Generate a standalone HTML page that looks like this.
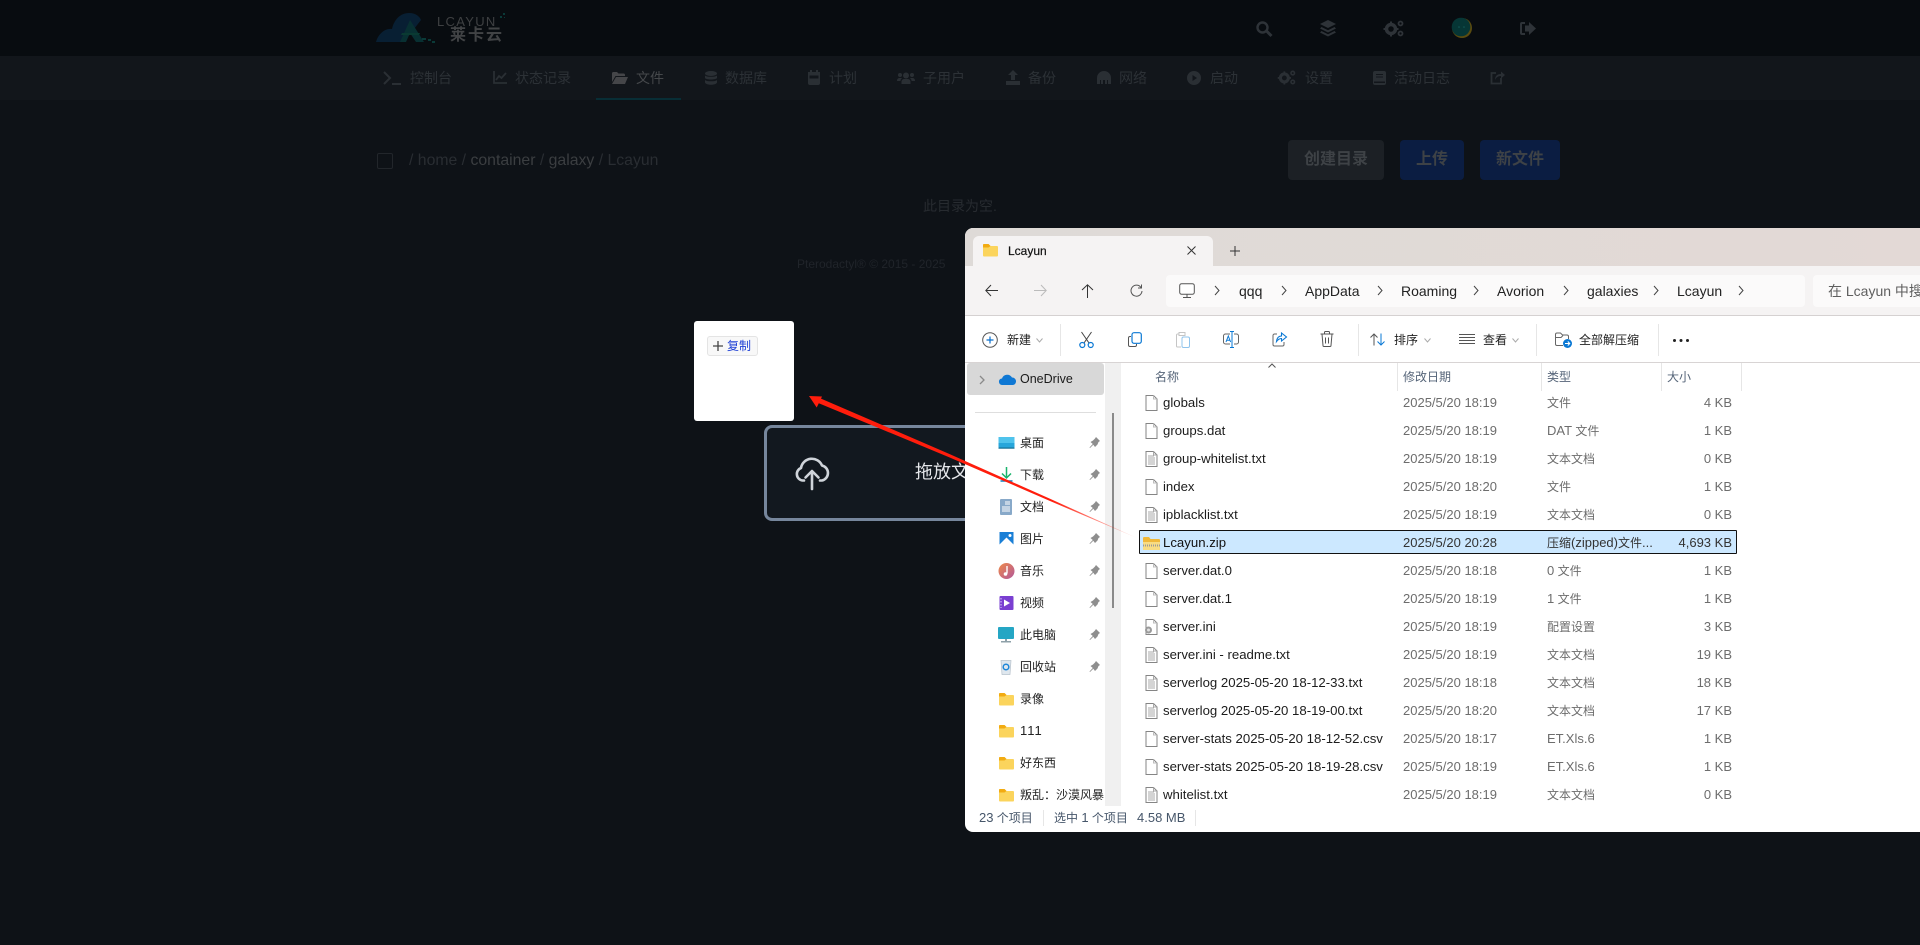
<!DOCTYPE html>
<html lang="zh"><head><meta charset="utf-8"><title>Lcayun</title>
<style>
html,body{margin:0;padding:0;width:1920px;height:945px;overflow:hidden;background:#0e1217}
body{position:relative;font-family:"Liberation Sans","Noto Sans CJK SC",sans-serif}
.a{position:absolute}
.n{position:absolute;top:56px;height:44px;line-height:44px;font-size:14px;color:#2c3136;white-space:nowrap}
svg.a{display:block;overflow:visible}
.ni{color:#2a2f34}
.ti{color:#2e3338}
.btn{position:absolute;top:140px;height:40px;line-height:40px;border-radius:4px;text-align:center;font-size:16px;font-weight:700;color:#3e4246}
#win{position:absolute;left:965px;top:228px;width:955px;height:604px;background:#fff;border-radius:8px 0 0 8px;overflow:hidden;font-size:13px;color:#1a1a1a}
.w{position:absolute;white-space:nowrap}
.c{font-size:12px}
.path{top:47px;height:32px;line-height:32px;font-size:14px;color:#222}
.chev{position:absolute;top:57px;width:6px;height:11px}
.tb{top:94px;height:36px;line-height:36px;font-size:12px;color:#222}
.v{position:absolute;width:1px;background:#e6e6e6}
.h{top:135px;height:28px;line-height:28px;font-size:12px;color:#566579}
.r{position:absolute;left:0;width:955px;height:28px;line-height:28px}
.r>span{position:absolute;white-space:nowrap}
.r svg{position:absolute;left:180px;top:6px;width:13px;height:16px}
.nm{left:198px;color:#1c1c1c;font-size:13.200px}
.dt{left:438px;color:#6d6d6d}
.ty{left:582px;color:#6d6d6d;font-size:12px}
.ty i{font-style:normal;font-size:13px}
.sz{right:188px;color:#6d6d6d}
.s{position:absolute;left:0;width:140px;height:32px;line-height:32px;font-size:12px;color:#222}
.s>span{position:absolute;left:55px;white-space:nowrap}
.s>svg{position:absolute;left:33px;top:8px;width:17px;height:16px}
.s>svg.p{left:124px;top:9px;width:12px;height:13px}
.sb{top:578px;height:24px;line-height:24px;font-size:12px;color:#46566a}
.sb i{font-style:normal;font-size:13px}
</style></head><body>
<svg width="0" height="0" style="position:absolute"><defs>
<symbol id="f" viewBox="0 0 13 16"><path d="M1 .5h7.500L12 4v11.500H1z" fill="#fff" stroke="#858585"/><path d="M8.500.5V4H12" fill="none" stroke="#bdbdbd"/></symbol>
<symbol id="x" viewBox="0 0 13 16"><path d="M1 .5h7.500L12 4v11.500H1z" fill="#fff" stroke="#858585"/><path d="M8.500.5V4H12M3 5h6M3 7h7M3 9h7M3 11h7M3 13h7" fill="none" stroke="#a8a8a8"/></symbol>
<symbol id="d" viewBox="0 0 17 16"><path d="M1 3a1 1 0 0 1 1-1h4.500l2 2H15a1 1 0 0 1 1 1v8.500a1 1 0 0 1-1 1H2a1 1 0 0 1-1-1z" fill="#fbd45c"/><path d="M1 3a1 1 0 0 1 1-1h4.500l2 2-2 1.500H1z" fill="#f2ab12"/></symbol>
<symbol id="pin" viewBox="0 0 12 13"><path d="M7 1l4 4-1.500 1-1 2.500L6 11 4.300 8.700 1 12l-.5-.5L3.800 8 1.500 6 4 4.500 6 2.500z" fill="#8e8e8e"/></symbol>
</defs></svg>

<!-- top bar -->
<div class="a" style="left:0;top:0;width:1920px;height:56px;background:#080c10"></div>
<div class="a" style="left:0;top:56px;width:1920px;height:44px;background:#12161b"></div>
<!-- logo -->
<svg class="a" style="left:376px;top:12px;width:72px;height:32px" viewBox="0 0 72 32">
<path d="M0 30C2 22 9 16 16 17 18 8 24 1 33 1 40 1 44 5 45 8L28 30z" fill="#081f33"/>
<path d="M24 30 34 8l14 22h-8l-6-9-4 9z" fill="#083032"/>
<path d="M26 21h18l-1 2H25z" fill="#0a3a32"/>
<path d="M46 26h4v2h-4zM52 27h3v2h-3zM56 29h3v2h-3z" fill="#0a3a38"/>
</svg>
<div class="a" style="left:437px;top:14px;font-size:13px;line-height:16px;color:#3e4042;letter-spacing:1.300px;font-weight:400;white-space:nowrap">LCAYUN</div>
<div class="a" style="left:450px;top:28px;font-size:16px;line-height:16px;color:#414345;letter-spacing:2px;font-weight:700;white-space:nowrap">莱卡云</div>
<svg class="a" style="left:500px;top:12px;width:8px;height:8px"><rect x="3" y="1" width="2" height="2" fill="#0a3a38"/><rect x="0" y="4" width="2" height="2" fill="#0a3a38"/><rect x="4" y="5" width="1" height="1" fill="#0a3a38"/></svg>

<!-- top icons -->
<svg class="a ti" style="left:1256px;top:21px;width:17px;height:16px" viewBox="0 0 17 16"><circle cx="6.500" cy="6.500" r="5" fill="none" stroke="currentColor" stroke-width="2.400"/><path d="M10.500 10l5 5" stroke="currentColor" stroke-width="3"/></svg>
<svg class="a ti" style="left:1320px;top:20px;width:16px;height:17px" viewBox="0 0 16 17" fill="currentColor"><path d="M8 0l8 4-8 4-8-4z"/><path d="M1.500 7L8 10.200 14.500 7 16 8.500l-8 4-8-4z"/><path d="M1.500 11L8 14.200 14.500 11 16 12.500l-8 4-8-4z"/></svg>
<svg class="a ti" style="left:1384px;top:20px;width:20px;height:17px" viewBox="0 0 20 17" fill="currentColor"><circle cx="7" cy="9" r="4.500" fill="none" stroke="currentColor" stroke-width="3.500"/><path d="M6 1.500h2v3H6zM6 13.500h2v3H6zM-.5 8h3v2h-3zM11.500 8h3v2h-3z"/><circle cx="16.500" cy="3.500" r="2" fill="none" stroke="currentColor" stroke-width="1.800"/><circle cx="16.500" cy="13.500" r="2" fill="none" stroke="currentColor" stroke-width="1.800"/></svg>
<svg class="a" style="left:1452px;top:18px;width:20px;height:20px" viewBox="0 0 20 20"><circle cx="10" cy="10" r="10" fill="#5a4c10"/><circle cx="9" cy="9" r="9.300" fill="#063635"/><circle cx="7" cy="9" r=".8" fill="#145a57"/><circle cx="12" cy="9" r=".8" fill="#145a57"/></svg>
<svg class="a ti" style="left:1520px;top:22px;width:16px;height:13px" viewBox="0 0 16 13" fill="currentColor"><path d="M5 1H2a1 1 0 0 0-1 1v9a1 1 0 0 0 1 1h3" fill="none" stroke="currentColor" stroke-width="2"/><path d="M9 0l7 6.500L9 13V9.500H5v-6h4z"/></svg>

<!-- nav -->
<svg class="a ni" style="left:383px;top:71px;width:19px;height:14px" viewBox="0 0 19 14"><path d="M1 1l6 6-6 6" fill="none" stroke="currentColor" stroke-width="2"/><path d="M9 13h9" stroke="currentColor" stroke-width="2"/></svg>
<div class="n" style="left:410px">控制台</div>
<svg class="a ni" style="left:493px;top:71px;width:14px;height:13px" viewBox="0 0 14 13"><path d="M1 0v12h13" fill="none" stroke="currentColor" stroke-width="1.800"/><path d="M3 9l3-4 2.500 2L13 2" fill="none" stroke="currentColor" stroke-width="1.800"/></svg>
<div class="n" style="left:515px">状态记录</div>
<svg class="a" style="left:612px;top:72px;width:16px;height:12px;color:#454649" viewBox="0 0 16 12" fill="currentColor"><path d="M0 1.500A1.500 1.500 0 0 1 1.500 0H5l1.500 1.500h5A1.500 1.500 0 0 1 13 3v1H3.500L0 10z"/><path d="M4 5h12l-3 7H0z"/></svg>
<div class="n" style="left:636px;color:#45484b">文件</div>
<div class="a" style="left:596px;top:98px;width:85px;height:2px;background:#082e36"></div>
<svg class="a ni" style="left:705px;top:71px;width:12px;height:14px" viewBox="0 0 12 14" fill="currentColor"><ellipse cx="6" cy="2.500" rx="6" ry="2.500"/><path d="M0 4.500c1 1.700 11 1.700 12 0V7c-1 2-11 2-12 0zM0 9c1 1.700 11 1.700 12 0v2.500c-1 3-11 3-12 0z"/></svg>
<div class="n" style="left:725px">数据库</div>
<svg class="a ni" style="left:808px;top:70px;width:12px;height:15px" viewBox="0 0 12 15" fill="currentColor"><path d="M2 0h2v2h4V0h2v2h2v11a2 2 0 0 1-2 2H2a2 2 0 0 1-2-2V2h2z"/><rect x="1.500" y="5.500" width="9" height="3" fill="#12161b"/></svg>
<div class="n" style="left:829px">计划</div>
<svg class="a ni" style="left:897px;top:72px;width:18px;height:12px" viewBox="0 0 18 12" fill="currentColor"><circle cx="9" cy="3.500" r="3"/><circle cx="3" cy="3" r="2"/><circle cx="15" cy="3" r="2"/><path d="M4.500 12V9.500A3 3 0 0 1 7.500 7h3a3 3 0 0 1 3 2.500V12zM0 8.500A2.500 2.500 0 0 1 2.500 6H5L3.500 8v1H0zM18 8.500A2.500 2.500 0 0 0 15.500 6H13l1.500 2v1H18z"/></svg>
<div class="n" style="left:923px">子用户</div>
<svg class="a ni" style="left:1006px;top:70px;width:14px;height:15px" viewBox="0 0 14 15" fill="currentColor"><path d="M7 0l5 5H9v5H5V5H2z"/><path d="M0 11h14v4H0z"/></svg>
<div class="n" style="left:1028px">备份</div>
<svg class="a ni" style="left:1097px;top:71px;width:14px;height:13px" viewBox="0 0 14 13" fill="currentColor"><path d="M0 13V7a7 7 0 0 1 14 0v6h-3V9h-1v4H8V9H6v4H4V9H3v4z"/></svg>
<div class="n" style="left:1119px">网络</div>
<svg class="a ni" style="left:1187px;top:71px;width:14px;height:14px" viewBox="0 0 14 14"><circle cx="7" cy="7" r="7" fill="currentColor"/><path d="M5.500 4l4.500 3-4.500 3z" fill="#12161b"/></svg>
<div class="n" style="left:1210px">启动</div>
<svg class="a ni" style="left:1278px;top:70px;width:18px;height:15px" viewBox="0 0 20 17" fill="currentColor"><circle cx="7" cy="9" r="4.500" fill="none" stroke="currentColor" stroke-width="3.500"/><path d="M6 1.500h2v3H6zM6 13.500h2v3H6zM-.5 8h3v2h-3zM11.500 8h3v2h-3z"/><circle cx="16.500" cy="3.500" r="2" fill="none" stroke="currentColor" stroke-width="1.800"/><circle cx="16.500" cy="13.500" r="2" fill="none" stroke="currentColor" stroke-width="1.800"/></svg>
<div class="n" style="left:1305px">设置</div>
<svg class="a ni" style="left:1373px;top:71px;width:13px;height:14px" viewBox="0 0 13 14" fill="currentColor"><rect width="13" height="14" rx="2"/><path d="M3 3h7v1H3zM3 5.500h7v1H3zM1 10.500h11v1.500H1z" fill="#12161b"/></svg>
<div class="n" style="left:1394px">活动日志</div>
<svg class="a ni" style="left:1490px;top:70px;width:15px;height:15px" viewBox="0 0 15 15"><path d="M6 3H1.500v10.500H11V8" fill="none" stroke="currentColor" stroke-width="1.800"/><path d="M5 10c0-4 2-6 6-6V1.500L15 5l-4 3.500V6C8 6 6 7.500 5 10z" fill="currentColor"/></svg>

<!-- content -->
<div class="a" style="left:377px;top:153px;width:14px;height:14px;border:1px solid #22262b;border-radius:2px"></div>
<div class="a" style="left:409px;top:149px;height:24px;line-height:24px;font-size:15.800px;color:#292d32;white-space:nowrap">/ home / <span style="color:#3b3e41">container</span> / <span style="color:#3b3e41">galaxy</span> / Lcayun</div>
<div class="btn" style="left:1288px;width:96px;background:#1c2025">创建目录</div>
<div class="btn" style="left:1400px;width:64px;background:#0b1d42">上传</div>
<div class="btn" style="left:1480px;width:80px;background:#0b1d42">新文件</div>
<div class="a" style="left:923px;top:196px;line-height:20px;font-size:14px;color:#272b30;white-space:nowrap">此目录为空.</div>
<div class="a" style="left:797px;top:256px;line-height:16px;font-size:12px;color:#20242a;white-space:nowrap">Pterodactyl® © 2015 - 2025</div>

<!-- drop zone -->
<div class="a" style="left:764px;top:425px;width:260px;height:90px;border:3px solid #76869c;border-radius:8px;background:#12181f"></div>
<svg class="a" style="left:795px;top:454px;width:34px;height:37px" viewBox="0 0 34 37" fill="none" stroke="#cfd4da" stroke-width="2.600" stroke-linecap="round" stroke-linejoin="round"><path d="M9 26.500H7.500A6.500 6.500 0 0 1 6 14 11 11 0 0 1 27 11.500 7.700 7.700 0 0 1 27 26.500h-2"/><path d="M17 35V17M10.500 23.500L17 17l6.500 6.500"/></svg>
<div class="a" style="left:915px;top:458px;line-height:28px;font-size:18px;color:#e5e7eb;white-space:nowrap">拖放文件上传</div>

<!-- white card -->
<div class="a" style="left:694px;top:321px;width:100px;height:100px;background:#fff;border-radius:3px"></div>
<div class="a" style="left:707px;top:336px;width:49px;height:18px;border:1px solid #e4e4e4;border-radius:3px;background:#f8f8f8"></div>
<svg class="a" style="left:713px;top:341px;width:10px;height:10px"><path d="M5 0v10M0 5h10" stroke="#444" stroke-width="1.300"/></svg>
<div class="a" style="left:727px;top:337px;line-height:18px;font-size:12px;color:#2142d6;white-space:nowrap">复制</div>

<!-- explorer -->
<div id="win">
<div class="a" style="left:0;top:0;width:955px;height:38px;background:linear-gradient(90deg,#dedad7,#e3d9d6)"></div>
<div class="a" style="left:8px;top:8px;width:240px;height:31px;background:#f5f3f3;border-radius:6px 6px 0 0"></div>
<div class="a" style="left:0;top:38px;width:955px;height:49px;background:#f5f3f3"></div>
<div class="a" style="left:0;top:87px;width:955px;height:1px;background:#d5d1d1"></div>
<svg class="a" style="left:17px;top:15px;width:17px;height:15px" viewBox="0 1 17 15"><use href="#d" width="17" height="16"/></svg>
<div class="w" style="left:43px;top:14px;line-height:18px;font-size:12px;color:#111;font-weight:400;-webkit-text-stroke:.2px #111">Lcayun</div>
<svg class="a" style="left:222px;top:18px;width:9px;height:9px"><path d="M.5.500l8 8M8.500.500l-8 8" stroke="#333" fill="none"/></svg>
<svg class="a" style="left:265px;top:18px;width:10px;height:10px"><path d="M5 0v10M0 5h10" stroke="#333"/></svg>
<!-- address row -->
<svg class="a" style="left:20px;top:56px;width:14px;height:13px" viewBox="0 0 14 13"><path d="M13 6.500H1M6 1L.8 6.500 6 12" fill="none" stroke="#333"/></svg>
<svg class="a" style="left:68px;top:56px;width:14px;height:13px" viewBox="0 0 14 13"><path d="M1 6.500h12M8 1l5.200 5.500L8 12" fill="none" stroke="#bbb"/></svg>
<svg class="a" style="left:116px;top:56px;width:13px;height:14px" viewBox="0 0 13 14"><path d="M6.500 14V1M1 6L6.500.8 12 6" fill="none" stroke="#333"/></svg>
<svg class="a" style="left:165px;top:56px;width:13px;height:13px" viewBox="0 0 13 13"><path d="M11 3.500A5.500 5.500 0 1 0 12 7M11.500.5v3.500H8" fill="none" stroke="#555"/></svg>
<div class="a" style="left:201px;top:47px;width:639px;height:32px;background:#fbfafa;border-radius:4px"></div>
<div class="a" style="left:848px;top:47px;width:120px;height:32px;background:#fbfafa;border-radius:4px"></div>
<svg class="a" style="left:214px;top:55px;width:16px;height:16px" viewBox="0 0 16 16"><rect x=".7" y=".7" width="14.600" height="10.600" rx="2" fill="#fff" stroke="#555"/><path d="M8 11.500v2.500M4 14.500h8" stroke="#555"/></svg>
<svg class="chev" style="left:249px" viewBox="0 0 6 11"><path d="M1 1l4 4.500L1 10" fill="none" stroke="#444"/></svg>
<div class="w path" style="left:274px">qqq</div>
<svg class="chev" style="left:316px" viewBox="0 0 6 11"><path d="M1 1l4 4.500L1 10" fill="none" stroke="#444"/></svg>
<div class="w path" style="left:340px">AppData</div>
<svg class="chev" style="left:412px" viewBox="0 0 6 11"><path d="M1 1l4 4.500L1 10" fill="none" stroke="#444"/></svg>
<div class="w path" style="left:436px">Roaming</div>
<svg class="chev" style="left:508px" viewBox="0 0 6 11"><path d="M1 1l4 4.500L1 10" fill="none" stroke="#444"/></svg>
<div class="w path" style="left:532px">Avorion</div>
<svg class="chev" style="left:598px" viewBox="0 0 6 11"><path d="M1 1l4 4.500L1 10" fill="none" stroke="#444"/></svg>
<div class="w path" style="left:622px">galaxies</div>
<svg class="chev" style="left:688px" viewBox="0 0 6 11"><path d="M1 1l4 4.500L1 10" fill="none" stroke="#444"/></svg>
<div class="w path" style="left:712px">Lcayun</div>
<svg class="chev" style="left:773px" viewBox="0 0 6 11"><path d="M1 1l4 4.500L1 10" fill="none" stroke="#444"/></svg>
<div class="w path" style="left:863px;color:#5f5f5f">在 Lcayun 中搜索</div>
<!-- toolbar -->
<svg class="a" style="left:17px;top:104px;width:16px;height:16px" viewBox="0 0 16 16"><circle cx="8" cy="8" r="7.300" fill="none" stroke="#555"/><path d="M8 4.500v7M4.500 8h7" stroke="#0a6fcc" stroke-width="1.200"/></svg>
<div class="w tb" style="left:42px">新建</div>
<svg class="a" style="left:71px;top:110px;width:7px;height:5px"><path d="M.5.500L3.500 4l3-3.500" fill="none" stroke="#aaa"/></svg>
<div class="v" style="left:95px;top:96px;height:32px"></div>
<svg class="a" style="left:114px;top:103px;width:15px;height:17px" viewBox="0 0 15 17"><path d="M2.500 1l7.500 11M12.500 1L5 12" stroke="#444" fill="none"/><circle cx="3.300" cy="14" r="2.500" fill="none" stroke="#0a78d4" stroke-width="1.200"/><circle cx="11.700" cy="14" r="2.500" fill="none" stroke="#0a78d4" stroke-width="1.200"/></svg>
<svg class="a" style="left:163px;top:104px;width:14px;height:15px" viewBox="0 0 14 15"><path d="M3 4.500H2a1.500 1.500 0 0 0-1.500 1.500v7A1.500 1.500 0 0 0 2 14.500h5A1.500 1.500 0 0 0 8.500 13v-1" fill="none" stroke="#555"/><rect x="4" y=".7" width="9.300" height="10.600" rx="2" fill="#fff" stroke="#0a78d4" stroke-width="1.200"/></svg>
<svg class="a" style="left:211px;top:104px;width:14px;height:16px" viewBox="0 0 14 16"><path d="M3.500 2H1.500A1 1 0 0 0 .5 3v11a1 1 0 0 0 1 1H5" fill="none" stroke="#c5c5c5"/><rect x="3" y=".5" width="6" height="3" fill="#fff" stroke="#c5c5c5"/><rect x="6" y="5" width="7.500" height="10.500" rx="1.500" fill="#fff" stroke="#90c4ec"/></svg>
<svg class="a" style="left:258px;top:103px;width:16px;height:17px" viewBox="0 0 16 17"><rect x=".5" y="3" width="15" height="10" rx="2" fill="none" stroke="#666"/><rect x="7" y="2" width="4" height="12" fill="#fff"/><path d="M3 11l2.300-6 2.300 6M3.800 9.300h3" stroke="#0a78d4" fill="none"/><path d="M9 .5v16M7 .5h4M7 16.500h4" stroke="#0a78d4" fill="none"/></svg>
<svg class="a" style="left:307px;top:103px;width:15px;height:16px" viewBox="0 0 15 16"><path d="M5 3H2.500A1.500 1.500 0 0 0 1 4.500v9A1.500 1.500 0 0 0 2.500 15h8a1.500 1.500 0 0 0 1.500-1.500V11" fill="none" stroke="#666"/><path d="M4.500 10.500C5 6.500 7 5 9.500 5V2L14.500 6 9.500 10V7.500c-2 0-3.500 1-5 3z" fill="none" stroke="#0a78d4" stroke-width="1.100"/></svg>
<svg class="a" style="left:355px;top:103px;width:14px;height:16px" viewBox="0 0 14 16"><path d="M.5 3h13M4.500 3V1.500a1 1 0 0 1 1-1h3a1 1 0 0 1 1 1V3M2 3l1 11.500a1 1 0 0 0 1 1h6a1 1 0 0 0 1-1L12 3M5.500 6.500v6M8.500 6.500v6" fill="none" stroke="#555"/></svg>
<div class="v" style="left:393px;top:96px;height:32px"></div>
<svg class="a" style="left:405px;top:105px;width:16px;height:13px" viewBox="0 0 16 13"><path d="M4 12.500V1M.5 4.500L4 1l3.500 3.500" fill="none" stroke="#555"/><path d="M11 .5V12M7.500 8.500L11 12l3.500-3.500" fill="none" stroke="#0a78d4"/></svg>
<div class="w tb" style="left:429px">排序</div>
<svg class="a" style="left:459px;top:110px;width:7px;height:5px"><path d="M.5.500L3.500 4l3-3.500" fill="none" stroke="#aaa"/></svg>
<svg class="a" style="left:494px;top:106px;width:16px;height:11px"><path d="M0 .5h16M0 3.500h16M0 6.500h16M0 9.500h16" stroke="#555"/></svg>
<div class="w tb" style="left:518px">查看</div>
<svg class="a" style="left:547px;top:110px;width:7px;height:5px"><path d="M.5.500L3.500 4l3-3.500" fill="none" stroke="#aaa"/></svg>
<div class="v" style="left:571px;top:96px;height:32px"></div>
<svg class="a" style="left:590px;top:104px;width:17px;height:16px" viewBox="0 0 17 16"><path d="M8 13.500H2A1.500 1.500 0 0 1 .5 12V2.500A1.500 1.500 0 0 1 2 1h3.500l2 2H12a1.500 1.500 0 0 1 1.500 1.500V7M.5 5.500h5.500l2-2" fill="none" stroke="#666"/><circle cx="12.500" cy="11.500" r="4.500" fill="#0a78d4"/><path d="M10 11.500h4.500M12.800 9.500l2 2-2 2" fill="none" stroke="#fff"/></svg>
<div class="w tb" style="left:614px">全部解压缩</div>
<div class="v" style="left:693px;top:96px;height:32px"></div>
<svg class="a" style="left:708px;top:111px;width:16px;height:3px" fill="#222"><circle cx="1.500" cy="1.500" r="1.500"/><circle cx="8" cy="1.500" r="1.500"/><circle cx="14.500" cy="1.500" r="1.500"/></svg>
<div class="a" style="left:0;top:134px;width:955px;height:1px;background:#d8d4d4"></div>
<!-- sidebar -->
<div class="a" style="left:2px;top:135px;width:137px;height:32px;background:#d8d8d8;border-radius:3px"></div>
<svg class="a" style="left:14px;top:147px;width:6px;height:10px" viewBox="0 0 6 10"><path d="M1 1l4 4-4 4" fill="none" stroke="#8a8a8a" stroke-width="1.300"/></svg>
<svg class="a" style="left:34px;top:145px;width:17px;height:12px" viewBox="0 0 17 12"><path d="M0 9a3 3 0 0 1 3-3.500A5.500 5.500 0 0 1 13 4.500 3.800 3.800 0 0 1 17 8.500 3.500 3.500 0 0 1 14 12H3A3 3 0 0 1 0 9z" fill="#0f78d4"/></svg>
<div class="w" style="left:55px;top:135px;line-height:32px;font-size:12.500px;color:#1a1a1a">OneDrive</div>
<div class="a" style="left:10px;top:184px;width:121px;height:1px;background:#dedede"></div>
<div class="a" style="left:140px;top:135px;width:16px;height:443px;background:#f0f0f0"></div>
<div class="a" style="left:146.500px;top:185px;width:2.500px;height:195px;background:#8a8a8a"></div>

<div class="s" style="top:199px"><svg viewBox="0 0 17 16"><rect x=".5" y="2" width="16" height="11" rx="1" fill="#27a6db"/><rect x=".5" y="2" width="16" height="6" fill="#4fc3ec"/><rect x=".5" y="12.500" width="16" height="1.200" fill="#106c92"/></svg><span>桌面</span><svg class="p"><use href="#pin"/></svg></div>
<div class="s" style="top:231px"><svg viewBox="0 0 17 16"><path d="M8.500 0v10M4 6.500l4.500 4.500L13 6.500" fill="none" stroke="#19b36b" stroke-width="1.500"/><path d="M2.500 14h12" stroke="#0f7fc0" stroke-width="1.500"/></svg><span>下载</span><svg class="p"><use href="#pin"/></svg></div>
<div class="s" style="top:263px"><svg viewBox="0 0 17 16"><rect x="2" y="0" width="12" height="16" rx="1" fill="#88a9c9"/><path d="M7 3h5M7 5h5M4 8h8M4 10h8M4 12h8" stroke="#fff"/></svg><span>文档</span><svg class="p"><use href="#pin"/></svg></div>
<div class="s" style="top:295px"><svg viewBox="0 0 17 16"><rect x="1.500" y="1" width="14" height="14" fill="#1a7fd6"/><path d="M1.500 13.500l7-7 7 7V15h-14z" fill="#fff"/><circle cx="12" cy="4.500" r="1.500" fill="#fff"/></svg><span>图片</span><svg class="p"><use href="#pin"/></svg></div>
<div class="s" style="top:327px"><svg viewBox="0 0 17 16"><defs><linearGradient id="m" x1="0" y1="0" x2="1" y2="1"><stop offset="0" stop-color="#ef8a4a"/><stop offset="1" stop-color="#b2579a"/></linearGradient></defs><circle cx="8.500" cy="8" r="8" fill="url(#m)"/><path d="M9 3v7.500" stroke="#fff" stroke-width="1.400"/><circle cx="7.500" cy="11" r="1.800" fill="#fff"/></svg><span>音乐</span><svg class="p"><use href="#pin"/></svg></div>
<div class="s" style="top:359px"><svg viewBox="0 0 17 16"><rect x="1.500" y="1" width="14" height="14" rx="1" fill="#7a3fd1"/><path d="M6 4.500l6 3.500-6 3.500z" fill="#fff"/><path d="M3 3v10" stroke="#bda0ee" stroke-width="1.500" stroke-dasharray="1.500 1.500"/></svg><span>视频</span><svg class="p"><use href="#pin"/></svg></div>
<div class="s" style="top:391px"><svg viewBox="0 0 17 16"><rect x="0" y="0" width="16" height="12" rx="1" fill="#25a6c4"/><rect x="7" y="12" width="2" height="2" fill="#8ea0a8"/><rect x="3" y="14" width="10" height="1.500" fill="#8ea0a8"/></svg><span>此电脑</span><svg class="p"><use href="#pin"/></svg></div>
<div class="s" style="top:423px"><svg viewBox="0 0 17 16"><path d="M3 1.500h10l-1 14H4z" fill="#dfe7ee" stroke="#b7c2cc" stroke-width=".7"/><circle cx="8" cy="8" r="2.800" fill="none" stroke="#2087d8" stroke-width="1.500"/></svg><span>回收站</span><svg class="p"><use href="#pin"/></svg></div>
<div class="s" style="top:455px"><svg viewBox="0 0 17 16"><use href="#d"/></svg><span>录像</span></div>
<div class="s" style="top:487px"><svg viewBox="0 0 17 16"><use href="#d"/></svg><span style="font-size:13px;letter-spacing:1px">111</span></div>
<div class="s" style="top:519px"><svg viewBox="0 0 17 16"><use href="#d"/></svg><span>好东西</span></div>
<div class="s" style="top:551px"><svg viewBox="0 0 17 16"><use href="#d"/></svg><span style="letter-spacing:0">叛乱：沙漠风暴</span></div>

<!-- headers -->
<svg class="a" style="left:303px;top:135px;width:8px;height:5px"><path d="M.5 4.500L4 1l3.500 3.500" fill="none" stroke="#555"/></svg>
<div class="w h" style="left:190px">名称</div>
<div class="w h" style="left:438px">修改日期</div>
<div class="w h" style="left:582px">类型</div>
<div class="w h" style="left:702px">大小</div>
<div class="v" style="left:432px;top:135px;height:28px"></div>
<div class="v" style="left:576px;top:135px;height:28px"></div>
<div class="v" style="left:696px;top:135px;height:28px"></div>
<div class="v" style="left:776px;top:135px;height:28px"></div>

<!-- rows -->
<div class="a" style="left:174px;top:302px;width:596px;height:22px;background:#cce8ff;border:1px solid #111;border-radius:1px"></div>
<div class="r" style="top:161px"><svg><use href="#f"/></svg><span class="nm">globals</span><span class="dt">2025/5/20 18:19</span><span class="ty">文件</span><span class="sz">4 KB</span></div>
<div class="r" style="top:189px"><svg><use href="#f"/></svg><span class="nm">groups.dat</span><span class="dt">2025/5/20 18:19</span><span class="ty"><i>DAT</i> 文件</span><span class="sz">1 KB</span></div>
<div class="r" style="top:217px"><svg><use href="#x"/></svg><span class="nm">group-whitelist.txt</span><span class="dt">2025/5/20 18:19</span><span class="ty">文本文档</span><span class="sz">0 KB</span></div>
<div class="r" style="top:245px"><svg><use href="#f"/></svg><span class="nm">index</span><span class="dt">2025/5/20 18:20</span><span class="ty">文件</span><span class="sz">1 KB</span></div>
<div class="r" style="top:273px"><svg><use href="#x"/></svg><span class="nm">ipblacklist.txt</span><span class="dt">2025/5/20 18:19</span><span class="ty">文本文档</span><span class="sz">0 KB</span></div>
<div class="r" style="top:301px"><svg style="left:178px;width:17px;top:7px;height:15px" viewBox="0 0 17 15"><path d="M0 2a1 1 0 0 1 1-1h5l1.500 2H16a1 1 0 0 1 1 1v10H0z" fill="#f0b83a"/><rect y="6" width="17" height="8" fill="#f8dc84"/><path d="M0 9.500h17" stroke="#9a9a9a" stroke-width="2" stroke-dasharray="1 1"/></svg><span class="nm" style="color:#111">Lcayun.zip</span><span class="dt" style="color:#333">2025/5/20 20:28</span><span class="ty" style="color:#333">压缩<i>(zipped)</i>文件<i>...</i></span><span class="sz" style="color:#333">4,693 KB</span></div>
<div class="r" style="top:329px"><svg><use href="#f"/></svg><span class="nm">server.dat.0</span><span class="dt">2025/5/20 18:18</span><span class="ty"><i>0</i> 文件</span><span class="sz">1 KB</span></div>
<div class="r" style="top:357px"><svg><use href="#f"/></svg><span class="nm">server.dat.1</span><span class="dt">2025/5/20 18:19</span><span class="ty"><i>1</i> 文件</span><span class="sz">1 KB</span></div>
<div class="r" style="top:385px"><svg><use href="#f"/><circle cx="3.500" cy="11" r="3.500" fill="#9a9a9a"/><circle cx="3.500" cy="11" r="1.500" fill="#e2e2e2"/></svg><span class="nm">server.ini</span><span class="dt">2025/5/20 18:19</span><span class="ty">配置设置</span><span class="sz">3 KB</span></div>
<div class="r" style="top:413px"><svg><use href="#x"/></svg><span class="nm">server.ini - readme.txt</span><span class="dt">2025/5/20 18:19</span><span class="ty">文本文档</span><span class="sz">19 KB</span></div>
<div class="r" style="top:441px"><svg><use href="#x"/></svg><span class="nm">serverlog 2025-05-20 18-12-33.txt</span><span class="dt">2025/5/20 18:18</span><span class="ty">文本文档</span><span class="sz">18 KB</span></div>
<div class="r" style="top:469px"><svg><use href="#x"/></svg><span class="nm">serverlog 2025-05-20 18-19-00.txt</span><span class="dt">2025/5/20 18:20</span><span class="ty">文本文档</span><span class="sz">17 KB</span></div>
<div class="r" style="top:497px"><svg><use href="#f"/></svg><span class="nm">server-stats 2025-05-20 18-12-52.csv</span><span class="dt">2025/5/20 18:17</span><span class="ty"><i>ET.Xls.6</i></span><span class="sz">1 KB</span></div>
<div class="r" style="top:525px"><svg><use href="#f"/></svg><span class="nm">server-stats 2025-05-20 18-19-28.csv</span><span class="dt">2025/5/20 18:19</span><span class="ty"><i>ET.Xls.6</i></span><span class="sz">1 KB</span></div>
<div class="r" style="top:553px"><svg><use href="#x"/></svg><span class="nm">whitelist.txt</span><span class="dt">2025/5/20 18:19</span><span class="ty">文本文档</span><span class="sz">0 KB</span></div>
<!-- status -->
<div class="w sb" style="left:14px"><i>23</i> 个项目</div>
<div class="v" style="left:78px;top:582px;height:16px"></div>
<div class="w sb" style="left:89px">选中 <i>1</i> 个项目</div>
<div class="w sb" style="left:172px"><i>4.58 MB</i></div>
<div class="v" style="left:230px;top:582px;height:16px"></div>
</div>

<!-- red arrow -->
<svg class="a" style="left:0;top:0;width:1920px;height:945px;pointer-events:none" viewBox="0 0 1920 945">
<defs><linearGradient id="ar" gradientUnits="userSpaceOnUse" x1="809" y1="396" x2="1137" y2="538"><stop offset="0" stop-color="#ff1d0c"/><stop offset=".74" stop-color="#ff1d0c"/><stop offset="1" stop-color="#ff1d0c" stop-opacity=".12"/></linearGradient></defs>
<path d="M809 396L822 396.500 821 398.600 950 454.200 1050 498.800 1137 538 1050 501 950 457.600 818.800 403.200 816.700 407.500z" fill="url(#ar)"/>
</svg>
</body></html>
